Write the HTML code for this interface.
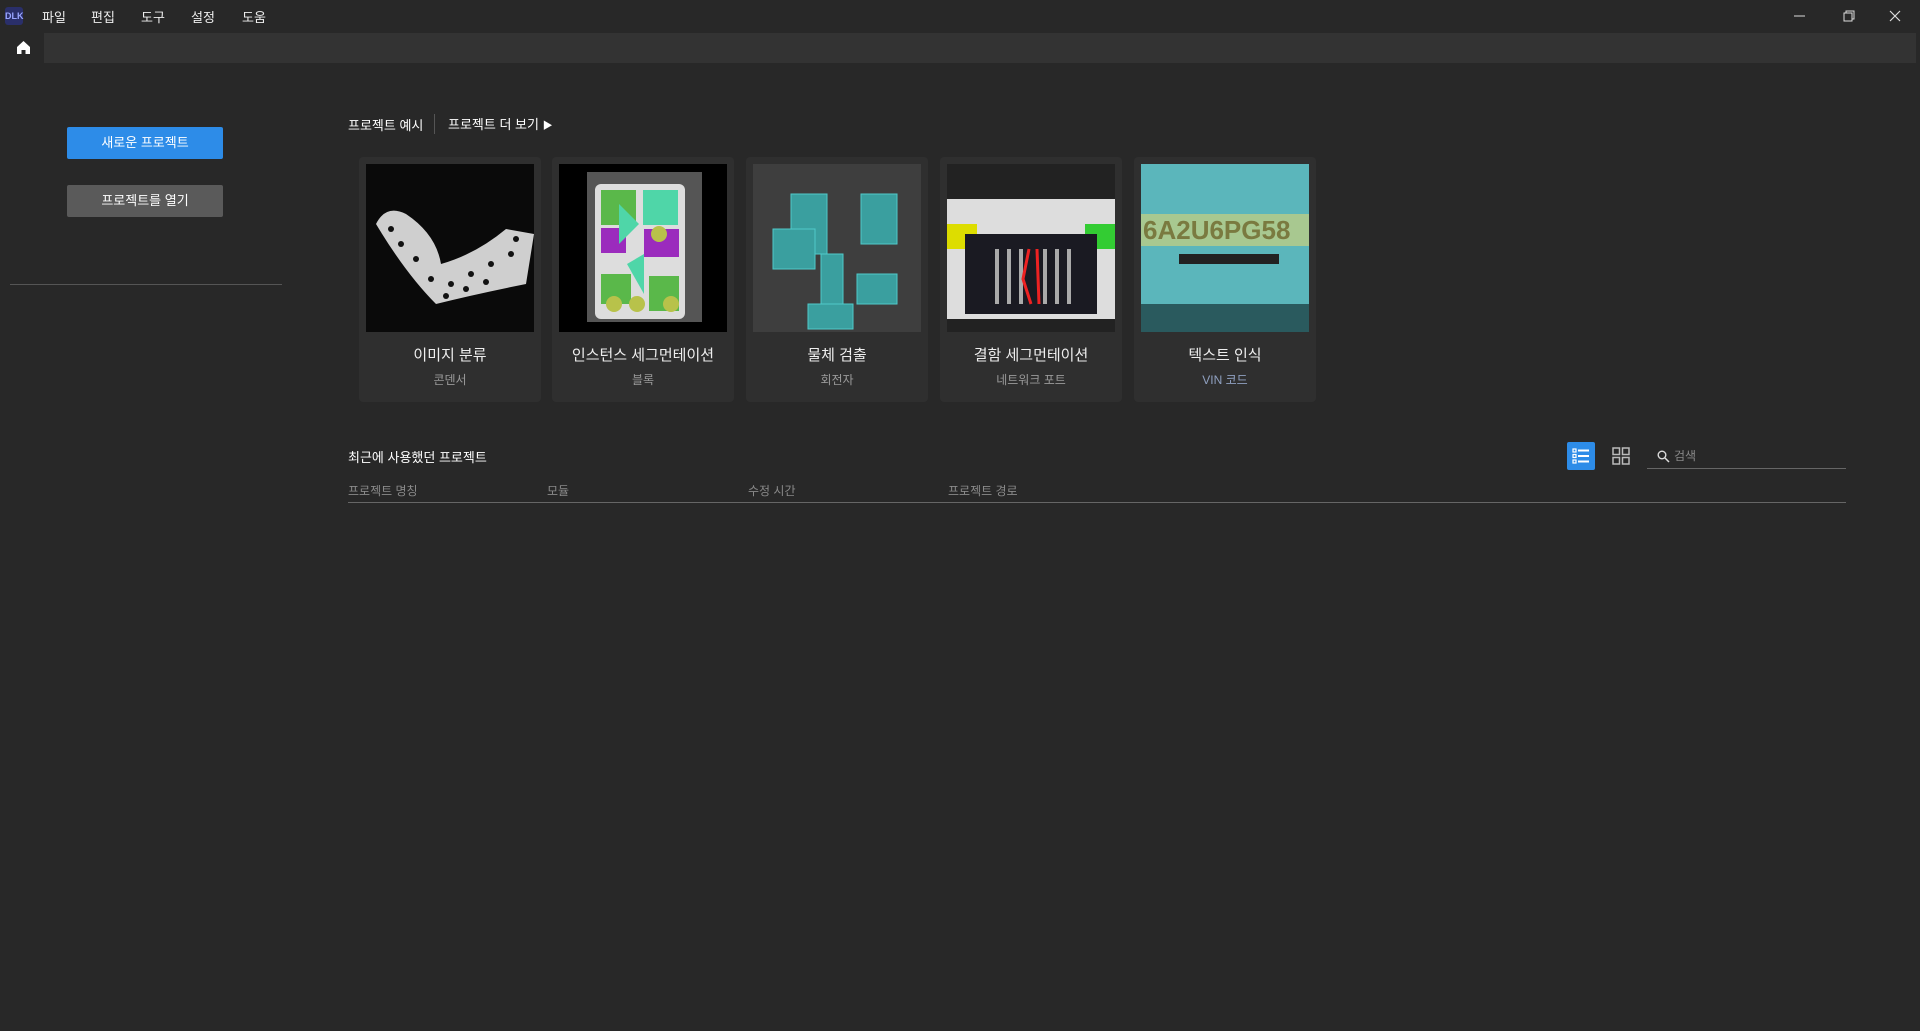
<!DOCTYPE html>
<html><head><meta charset="utf-8"><style>
*{margin:0;padding:0;box-sizing:border-box}
body{width:1920px;height:1031px;background:#282828;font-family:"Liberation Sans","Noto Sans CJK KR",sans-serif;color:#e8e8e8;position:relative;overflow:hidden;font-size:13px}
.a{position:absolute;white-space:nowrap}
.menu span{position:absolute;top:7px;font-size:13px;color:#eee}
.card{position:absolute;top:157px;width:182px;height:245px;background:#2f2f2f;border-radius:4px}
.card .img{position:absolute;left:7px;top:7px;width:168px;height:168px;overflow:hidden}
.card .t{position:absolute;top:187px;width:100%;text-align:center;font-size:15px;color:#eee}
.card .s{position:absolute;top:214px;width:100%;text-align:center;font-size:12px;color:#9a9a9a}
.col{position:absolute;top:482px;font-size:12px;color:#8a8a8a}
</style></head><body>
<div class="a" style="left:5px;top:7px;width:18px;height:18px;background:#2a2f6a;border-radius:3px;color:#9aa6ff;font-size:9px;font-weight:bold;line-height:18px;text-align:center">DLK</div>
<div class="menu"><span style="left:42px">파일</span><span style="left:91px">편집</span><span style="left:141px">도구</span><span style="left:191px">설정</span><span style="left:242px">도움</span></div>
<svg class="a" style="left:1790px;top:10px" width="120" height="14"><line x1="4" y1="6" x2="15" y2="6" stroke="#ddd"/><rect x="54" y="3" width="8" height="8" fill="none" stroke="#ddd"/><path d="M56 3V1h8v8h-2" fill="none" stroke="#ddd"/><path d="M100 1l10 10M110 1l-10 10" stroke="#ddd" stroke-width="1.2"/></svg>
<svg class="a" style="left:16px;top:40px" width="15" height="15"><path d="M1 7L7.5 1 14 7v7H9.5v-4h-4v4H1z" fill="#fff"/></svg>
<div class="a" style="left:44px;top:33px;width:1872px;height:30px;background:#333"></div>
<div class="a" style="left:67px;top:127px;width:156px;height:32px;background:#2d8ce8;border-radius:2px;text-align:center;line-height:32px;color:#fff">새로운 프로젝트</div>
<div class="a" style="left:67px;top:185px;width:156px;height:32px;background:#5a5a5a;border-radius:2px;text-align:center;line-height:32px;color:#fff">프로젝트를 열기</div>
<div class="a" style="left:10px;top:284px;width:272px;height:1px;background:#555"></div>
<div class="a" style="left:348px;top:115px;color:#fff">프로젝트 예시</div>
<div class="a" style="left:434px;top:114px;width:1px;height:20px;background:#555"></div>
<div class="a" style="left:448px;top:114px;color:#fff">프로젝트 더 보기 <span style="font-size:10px">▶</span></div>

<div class="card" style="left:359px"><div class="img" style="background:#0a0a0a"><svg width="168" height="168"><path d="M10 60 Q20 40 40 50 Q70 70 75 100 Q110 90 140 65 L168 70 L160 120 Q110 130 70 140 Q40 110 10 60z" fill="#cfcfcf"/><g fill="#111"><circle cx="25" cy="65" r="3"/><circle cx="35" cy="80" r="3"/><circle cx="50" cy="95" r="3"/><circle cx="65" cy="115" r="3"/><circle cx="85" cy="120" r="3"/><circle cx="105" cy="110" r="3"/><circle cx="125" cy="100" r="3"/><circle cx="145" cy="90" r="3"/><circle cx="150" cy="75" r="3"/><circle cx="80" cy="132" r="3"/><circle cx="100" cy="125" r="3"/><circle cx="120" cy="118" r="3"/></g></svg></div><div class="t">이미지 분류</div><div class="s">콘덴서</div></div>

<div class="card" style="left:552px"><div class="img" style="background:#000"><svg width="168" height="168"><rect x="28" y="8" width="115" height="150" fill="#555"/><rect x="36" y="20" width="90" height="135" rx="6" fill="#ddd"/><rect x="42" y="26" width="35" height="35" fill="#5ab84a"/><rect x="84" y="26" width="35" height="35" fill="#4fd6a8"/><rect x="42" y="64" width="25" height="25" fill="#9b2bbd"/><rect x="85" y="65" width="35" height="28" fill="#9b2bbd"/><polygon points="60,40 80,60 60,80" fill="#4fd6a8"/><rect x="42" y="110" width="30" height="30" fill="#5ab84a"/><rect x="90" y="112" width="30" height="35" fill="#5ab84a"/><circle cx="55" cy="140" r="8" fill="#b8c24a"/><circle cx="78" cy="140" r="8" fill="#b8c24a"/><circle cx="112" cy="140" r="8" fill="#b8c24a"/><circle cx="100" cy="70" r="8" fill="#b8c24a"/><polygon points="68,100 85,90 85,130" fill="#4fd6a8"/></svg></div><div class="t">인스턴스 세그먼테이션</div><div class="s">블록</div></div>

<div class="card" style="left:746px"><div class="img" style="background:#3e3e3e"><svg width="168" height="168"><g fill="#3ab8b8" opacity=".8" stroke="#5ee"><rect x="38" y="30" width="36" height="60"/><rect x="108" y="30" width="36" height="50"/><rect x="20" y="65" width="42" height="40"/><rect x="68" y="90" width="22" height="60"/><rect x="104" y="110" width="40" height="30"/><rect x="55" y="140" width="45" height="25"/></g></svg></div><div class="t">물체 검출</div><div class="s">회전자</div></div>

<div class="card" style="left:940px"><div class="img" style="background:#222"><svg width="168" height="168"><rect x="0" y="35" width="168" height="120" fill="#ddd"/><rect x="0" y="60" width="30" height="25" fill="#dd0"/><rect x="138" y="60" width="30" height="25" fill="#3c3"/><rect x="18" y="70" width="132" height="80" fill="#1a1a22"/><g stroke="#aaa" stroke-width="4"><line x1="50" y1="85" x2="50" y2="140"/><line x1="62" y1="85" x2="62" y2="140"/><line x1="74" y1="85" x2="74" y2="140"/><line x1="98" y1="85" x2="98" y2="140"/><line x1="110" y1="85" x2="110" y2="140"/><line x1="122" y1="85" x2="122" y2="140"/></g><path d="M82 85L76 115 84 140M90 85 92 140" stroke="#e22" stroke-width="3" fill="none"/></svg></div><div class="t">결함 세그먼테이션</div><div class="s">네트워크 포트</div></div>

<div class="card" style="left:1134px"><div class="img" style="background:#5bb6bb"><svg width="168" height="168"><rect x="0" y="50" width="168" height="32" fill="#a8c890"/><text x="2" y="75" font-size="26" font-family="Liberation Sans" fill="#7a7a40" font-weight="bold">6A2U6PG58</text><rect x="38" y="90" width="100" height="10" fill="#222"/><rect x="0" y="140" width="168" height="28" fill="#2a5a5e"/></svg></div><div class="t">텍스트 인식</div><div class="s" style="color:#8fa0c0">VIN 코드</div></div>

<div class="a" style="left:348px;top:447px;color:#fff">최근에 사용했던 프로젝트</div>
<div class="col" style="left:348px">프로젝트 명칭</div>
<div class="col" style="left:547px">모듈</div>
<div class="col" style="left:748px">수정 시간</div>
<div class="col" style="left:948px">프로젝트 경로</div>
<div class="a" style="left:348px;top:502px;width:1498px;height:1px;background:#666"></div>
<div class="a" style="left:1567px;top:442px;width:28px;height:28px;background:#2d8ce8;border-radius:2px"><svg width="28" height="28"><g fill="none" stroke="#fff" stroke-width="1.2"><rect x="6" y="7" width="3" height="3"/><rect x="6" y="12.5" width="3" height="3"/><rect x="6" y="18" width="3" height="3"/></g><g stroke="#fff" stroke-width="2"><line x1="11" y1="8.5" x2="22" y2="8.5"/><line x1="11" y1="14" x2="22" y2="14"/><line x1="11" y1="19.5" x2="22" y2="19.5"/></g></svg></div>
<svg class="a" style="left:1612px;top:447px" width="18" height="18"><g fill="none" stroke="#bbb" stroke-width="1.5"><rect x="1" y="1" width="6.5" height="6.5"/><rect x="10.5" y="1" width="6.5" height="6.5"/><rect x="1" y="10.5" width="6.5" height="6.5"/><rect x="10.5" y="10.5" width="6.5" height="6.5"/></g></svg>
<svg class="a" style="left:1657px;top:450px" width="13" height="13"><circle cx="5" cy="5" r="3.8" fill="none" stroke="#ddd" stroke-width="1.4"/><line x1="8" y1="8" x2="12" y2="12" stroke="#ddd" stroke-width="1.5"/></svg>
<div class="a" style="left:1674px;top:447px;font-size:12px;color:#888">검색</div>
<div class="a" style="left:1647px;top:468px;width:199px;height:1px;background:#666"></div>
</body></html>
